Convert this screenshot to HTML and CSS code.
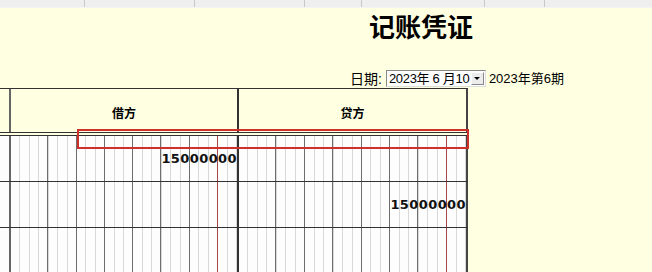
FILE: index.html
```html
<!DOCTYPE html>
<html lang="zh-CN">
<head>
<meta charset="UTF-8">
<title>记账凭证</title>
<link rel="stylesheet" href="styles.css">
</head>
<body>
  <div class="topbar">
    <span></span><span></span><span></span><span></span><span></span><span></span><span></span>
  </div>
  <h1 class="title">记账凭证</h1>
  <div class="dateline">
    <span class="label">日期:</span>
    <span class="datebox">
      <span class="datetext">2023年 6 月10</span>
      <span class="drop"><i class="arrow"></i></span>
    </span>
    <span class="period">2023年第6期</span>
  </div>
  <div class="voucher">
    <div class="row head">
      <div class="lead"></div>
      <div class="col debit">借方</div>
      <div class="col credit">贷方</div>
    </div>
    <div class="grid">
      <div class="row line">
        <div class="lead"></div>
        <div class="amount debit">15000000</div>
        <div class="amount credit"></div>
      </div>
      <div class="row line">
        <div class="lead"></div>
        <div class="amount debit"></div>
        <div class="amount credit">15000000</div>
      </div>
      <div class="row line last">
        <div class="lead"></div>
        <div class="amount debit"></div>
        <div class="amount credit"></div>
      </div>
    </div>
    <!-- selected row marker -->
    <div class="highlight"></div>
  </div>
</body>
</html>
```

FILE: styles.css
```css
html, body {
  margin: 0;
  height: 272px;
  overflow: hidden;
}

body {
  background: #ffffe1;
  color: #000;
  font-family: "Liberation Sans", "Noto Sans CJK SC", sans-serif;
  font-size: 13px;
}

/* strip of the spreadsheet toolbar above the form */
.topbar {
  display: grid;
  grid-template-columns: 85px 110px 110px 57px 123px 60px 1fr;
  height: 7px;
  background: #efefef;
  border-bottom: 1px solid #f4f4f0;
}

.topbar span {
  border-right: 1px solid #c8c8c8;
}

.topbar span:last-child {
  border-right: 0;
}

.title {
  margin: 0;
  height: 36px;
  line-height: 36px;
  padding-left: 369px;
  font-family: "Noto Sans CJK SC", sans-serif;
  font-size: 26px;
  font-weight: 700;
}

.dateline {
  display: flex;
  align-items: flex-end;
  height: 44px;
  padding-left: 350px;
  padding-bottom: 1px;
  box-sizing: border-box;
  line-height: 16px;
}

.label {
  margin-right: 4px;
  font-size: 14px;
}

.datebox {
  display: flex;
  align-items: center;
  width: 98px;
  height: 15px;
  background: #fff;
  border: 1px solid #888;
  border-right-color: #ddd;
  border-bottom-color: #ddd;
}

.datetext {
  flex: 1;
  padding-left: 2px;
  letter-spacing: -0.3px;
  white-space: nowrap;
}

.drop {
  display: flex;
  align-items: center;
  justify-content: center;
  width: 13px;
  height: 13px;
  margin-right: 1px;
  background: #ececec;
  border: 1px solid #fff;
  border-right-color: #888;
  border-bottom-color: #888;
  box-sizing: border-box;
}

.arrow {
  width: 0;
  height: 0;
  border-left: 3px solid transparent;
  border-right: 3px solid transparent;
  border-top: 3px solid #000;
}

.period {
  margin-left: 3px;
}

/* voucher table */
.voucher {
  position: relative;
  width: 468px;
  border-top: 1px solid #333;
}

.row {
  display: flex;
}

.lead {
  width: 9px;
  border-right: 2px solid #666;
}

.debit {
  width: 226px;
  border-right: 2px solid #333;
}

.credit {
  width: 227px;
  border-right: 2px solid #444;
}

.head {
  height: 43px;
  border-bottom: 1px solid #333;
}

.col {
  display: flex;
  align-items: center;
  justify-content: center;
  padding-top: 4px;
  font-family: "Noto Sans CJK SC", sans-serif;
  font-size: 12px;
  font-weight: 700;
}

.grid {
  margin-top: 2px;
  border-top: 1px solid #333;
}

.line {
  height: 45px;
  border-bottom: 1px solid #333;
}

.line.last {
  border-bottom: 0;
}

.line .lead {
  background: #fdfdfd;
}

/* 24 digit columns: red mark before jiao/fen, group marks every three */
.amount {
  display: flex;
  align-items: center;
  justify-content: flex-end;
  background-color: #fdfdfd;
  background-image:
    linear-gradient(90deg, transparent calc(91.6667% - 1px), #a54a4a calc(91.6667% - 1px) 91.6667%, transparent 91.6667%),
    repeating-linear-gradient(90deg, transparent 0 calc(4.7619% - 1px), #6e6e6e calc(4.7619% - 1px) 4.7619%, transparent 4.7619% 14.2857%),
    repeating-linear-gradient(90deg, transparent 0 calc(4.1667% - 1px), #d8d8d8 calc(4.1667% - 1px) 4.1667%);
  background-size: 100% 100%, 87.5% 100%, 100% 100%;
  background-position: 0 0, right top, 0 0;
  background-repeat: no-repeat;
  font-family: "DejaVu Sans", sans-serif;
  font-size: 13px;
  font-weight: 700;
  letter-spacing: 0.4px;
  color: #111;
}

.highlight {
  position: absolute;
  left: 77px;
  top: 40px;
  width: 388px;
  height: 16px;
  border: 2px solid #d0302c;
}
```
